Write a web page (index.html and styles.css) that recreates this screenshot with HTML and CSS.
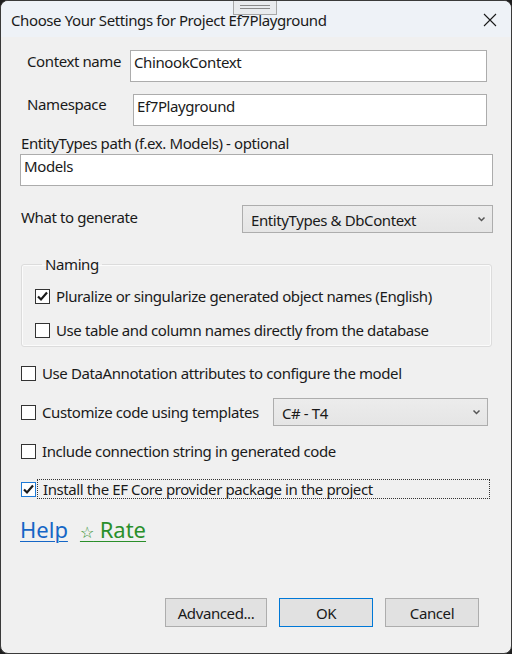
FILE: index.html
```html
<!DOCTYPE html>
<html>
<head>
<meta charset="utf-8">
<link rel="stylesheet" href="styles.css">
</head>
<body>
<div class="window">
  <div class="titlebar">
    <div class="grip"><span></span></div>
    <div class="title">Choose Your Settings for Project Ef7Playground</div>
    <svg class="close" width="14" height="14" viewBox="0 0 14 14"><path d="M1 1 L13 13 M13 1 L1 13" stroke="#1a1a1a" stroke-width="1.1" fill="none"/></svg>
  </div>
  <div class="content">
    <div class="row row-context">
      <label class="lbl lbl-context">Context name</label>
      <div class="textbox tb-context">ChinookContext</div>
    </div>
    <div class="row row-ns">
      <label class="lbl lbl-ns">Namespace</label>
      <div class="textbox tb-ns">Ef7Playground</div>
    </div>
    <div class="lbl-path">EntityTypes path (f.ex. Models) - optional</div>
    <div class="textbox tb-path">Models</div>
    <div class="row row-gen">
      <div class="lbl-gen">What to generate</div>
      <div class="combo combo-gen"><span>EntityTypes &amp; DbContext</span><svg class="chev" width="9" height="6" viewBox="0 0 9 6"><path d="M1.5 1.5 L4.5 4.5 L7.5 1.5" stroke="#555" stroke-width="1.5" fill="none"/></svg></div>
    </div>
    <fieldset class="group">
      <legend>Naming</legend>
      <div class="check check-g1"><span class="box checked"><svg width="13" height="13" viewBox="0 0 13 13"><path d="M2 6.5 L5 9.5 L11 2.5" stroke="#1a1a1a" stroke-width="2.2" fill="none"/></svg></span><span>Pluralize or singularize generated object names (English)</span></div>
      <div class="check check-g2"><span class="box"></span><span>Use table and column names directly from the database</span></div>
    </fieldset>
    <div class="check check-da"><span class="box"></span><span>Use DataAnnotation attributes to configure the model</span></div>
    <div class="row row-tpl">
      <div class="check check-tpl"><span class="box"></span><span>Customize code using templates</span></div>
      <div class="combo combo-tpl"><span>C# - T4</span><svg class="chev" width="9" height="6" viewBox="0 0 9 6"><path d="M1.5 1.5 L4.5 4.5 L7.5 1.5" stroke="#555" stroke-width="1.5" fill="none"/></svg></div>
    </div>
    <div class="check check-conn"><span class="box"></span><span>Include connection string in generated code</span></div>
    <div class="check check-install"><span class="box checked focus"><svg width="13" height="13" viewBox="0 0 13 13"><path d="M2 6.5 L5 9.5 L11 2.5" stroke="#1a1a1a" stroke-width="2.2" fill="none"/></svg></span><span class="focus-text">Install the EF Core provider package in the project</span></div>
    <div class="links">
      <a class="help">Help</a>
      <a class="rate"><span class="star">☆</span> Rate</a>
    </div>
    <div class="buttons">
      <button class="btn btn-adv">Advanced...</button>
      <button class="btn btn-ok">OK</button>
      <button class="btn btn-cancel">Cancel</button>
    </div>
  </div>
</div>
</body>
</html>
```
FILE: styles.css
```css
html, body {
  margin: 0;
  padding: 0;
  background: #1e1e1e;
}
body {
  width: 512px;
  height: 654px;
  overflow: hidden;
  font-family: "Noto Sans", "Open Sans", sans-serif;
  font-size: 15px;
  letter-spacing: -0.4px;
  color: #1a1a1a;
}
.window {
  box-sizing: border-box;
  width: 512px;
  height: 654px;
  border: 1px solid #3a3a3a;
  border-radius: 8px;
  background: #f0f0f0;
  overflow: hidden;
  display: flex;
  flex-direction: column;
}
.titlebar {
  position: relative;
  height: 36px;
  flex: none;
  background: #eef2f7;
  display: flex;
  align-items: center;
  padding-left: 10px;
  padding-right: 14px;
}
.title {
  flex: 1;
  font-size: 15px;
  line-height: 20px;
  margin-top: 1px;
}
.close {
  margin-top: 1px;
}
.grip {
  position: absolute;
  left: 232px;
  top: -1px;
  width: 42px;
  height: 14px;
  background: #e9ebee;
  border: 1px solid #a8a8a8;
  border-top: none;
}
.grip span {
  position: absolute;
  left: 6px;
  right: 6px;
  top: 5px;
  height: 2px;
  border-top: 1px solid #8a8a8a;
  border-bottom: 1px solid #8a8a8a;
}
.content {
  flex: 1;
  padding: 0 19px 0 19px;
  display: flex;
  flex-direction: column;
}
.row {
  display: flex;
  align-items: flex-start;
}
.lbl {
  line-height: 20px;
  padding-top: 1px;
}
.textbox {
  box-sizing: border-box;
  height: 32px;
  background: #fff;
  border: 1px solid #acacac;
  padding: 1px 3px;
  line-height: 20px;
}
.row-context {
  margin-top: 13px;
}
.lbl-context {
  margin-left: 7px;
  width: 103px;
}
.tb-context {
  width: 357px;
}
.row-ns {
  margin-top: 12px;
}
.lbl-ns {
  margin-left: 7px;
  width: 106px;
  padding-top: 0;
}
.tb-ns {
  width: 354px;
}
.lbl-path {
  margin-top: 7px;
  line-height: 20px;
  margin-left: 1px;
}
.tb-path {
  margin-top: 1px;
  width: 473px;
}
.row-gen {
  margin-top: 19px;
  justify-content: space-between;
  align-items: center;
  width: 473px;
}
.lbl-gen {
  margin-left: 1px;
  margin-top: -5px;
  line-height: 20px;
}
.combo {
  box-sizing: border-box;
  height: 28px;
  border: 1px solid #adadad;
  background: linear-gradient(#ececec, #e5e5e5);
  display: flex;
  align-items: center;
  justify-content: space-between;
  padding: 0 6px 0 8px;
  line-height: 20px;
}
.combo span {
  margin-top: 1px;
}
.combo-gen {
  width: 251px;
}
.group {
  margin: 21px 0 0 1px;
  width: 471px;
  box-sizing: border-box;
  height: 93px;
  border: 1px solid #dcdcdc;
  border-radius: 3px;
  box-shadow: inset 0 0 0 1px #fbfbfb;
  padding: 0 0 0 13px;
}
.group legend {
  padding: 0 3px;
  margin-left: 7px;
  line-height: 20px;
}
.check {
  display: flex;
  align-items: center;
  line-height: 20px;
}
.box {
  box-sizing: border-box;
  width: 15px;
  height: 15px;
  border: 1px solid #333;
  background: #fff;
  margin-right: 6px;
  flex: none;
  display: flex;
  align-items: center;
  justify-content: center;
}
.box.focus {
  border-color: #1e7ad6;
}
.check-g1 {
  margin-top: 12px;
}
.check-g2 {
  margin-top: 14px;
}
.check-da {
  margin-top: 16px;
  margin-left: 1px;
}
.row-tpl {
  margin-top: 15px;
  margin-left: 1px;
  align-items: center;
}
.check-tpl {
  width: 252px;
  flex: none;
}
.combo-tpl {
  width: 215px;
}
.check-conn {
  margin-top: 15px;
  margin-left: 1px;
}
.check-install {
  margin-top: 19px;
  margin-left: 1px;
}
.focus-text {
  box-sizing: border-box;
  margin-left: -4px;
  padding-left: 5px;
  width: 451px;
  outline: 1px dotted #333;
  outline-offset: 0;
  line-height: 18px;
}
.links {
  margin-top: 17px;
  margin-left: 0;
  display: flex;
  font-size: 22px;
  line-height: 28px;
  letter-spacing: 0;
}
.help {
  color: #1566c6;
  text-decoration: underline;
  text-decoration-thickness: 1px;
  text-underline-offset: 3px;
}
.rate {
  color: #2a8f2a;
  text-decoration: underline;
  text-decoration-thickness: 1px;
  text-underline-offset: 3px;
  margin-left: 8px;
  padding-left: 4px;
}
.star {
  font-size: 16px;
}
.buttons {
  margin-top: auto;
  margin-bottom: 26px;
  display: flex;
  justify-content: flex-end;
  gap: 12px;
  padding-right: 13px;
}
.btn {
  box-sizing: border-box;
  height: 29px;
  background: #e1e1e1;
  border: 1px solid #adadad;
  font-family: inherit;
  font-size: 15px;
  letter-spacing: -0.4px;
  color: #1a1a1a;
  padding: 0;
}
.btn-adv { width: 102px; }
.btn-ok { width: 94px; border-color: #0078d7; }
.btn-cancel { width: 94px; }
```
